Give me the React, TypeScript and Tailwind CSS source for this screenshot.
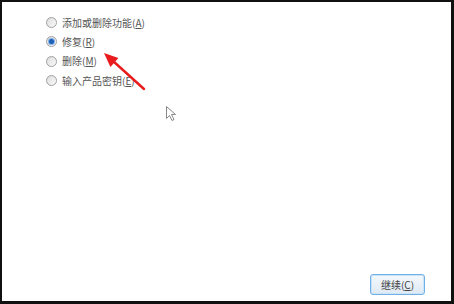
const options = [
  { label: '添加或删除功能', key: 'A' },
  { label: '修复', key: 'R' },
  { label: '删除', key: 'M' },
  { label: '输入产品密钥', key: 'E' },
];

function Radio({ checked }: { checked: boolean }) {
  return (
    <span className="relative w-[11px] h-[11px] rounded-full border border-[#a0a0a0] bg-gradient-to-br from-[#dcdcdc] to-[#fbfbfb] flex items-center justify-center flex-shrink-0">
      {checked && (
        <span className="w-[5px] h-[5px] rounded-full bg-[#1e5fb8] ring-1 ring-[#7fb0e6]"></span>
      )}
    </span>
  );
}

export default function App() {
  const selected = 'R';

  return (
    <div
      className="relative w-[454px] h-[304px] bg-white border-t-2 border-l-2 border-r-[3px] border-b-[3px] border-[#111] flex flex-col text-[#555]"
      style={{ fontFamily: '"Noto Sans CJK SC", "Liberation Sans", sans-serif' }}
    >
      {/* Options */}
      <div className="pl-[44px] pt-[11px] flex flex-col">
        {options.map(opt => (
          <label key={opt.key} className="h-[19.3px] flex items-center gap-[5px] text-[10px] leading-none">
            <Radio checked={opt.key === selected} />
            <span>
              {opt.label}(<span className="underline">{opt.key}</span>)
            </span>
          </label>
        ))}
      </div>

      <div className="flex-1"></div>

      {/* Continue */}
      <div className="flex justify-end pr-[26px] pb-[6px]">
        <button className="w-[55px] h-[21px] rounded-[3px] border border-[#6fb0e8] bg-gradient-to-b from-[#f4f9fd] to-[#dfe9f3] text-[10px] text-[#444] shadow-[inset_0_0_0_1px_#cbe3f6]">
          继续(<span className="underline">C</span>)
        </button>
      </div>

      {/* Red annotation arrow + mouse cursor */}
      <svg className="absolute left-[-2px] top-[-2px] pointer-events-none" width="454" height="304">
        <line x1="144" y1="89" x2="113" y2="61" stroke="#e81c1c" strokeWidth="2.4" strokeLinecap="round" />
        <polygon points="104,53 118.4,57.9 110.4,66.9" fill="#e81c1c" />
        <path
          d="M166.5 106.5 L166.5 118.5 L169.5 115.5 L172 120.5 L174 119.5 L171.5 114.5 L175.5 114.5 Z"
          fill="#fff"
          stroke="#8a8a8a"
          strokeWidth="1"
          strokeLinejoin="round"
        />
      </svg>
    </div>
  );
}
